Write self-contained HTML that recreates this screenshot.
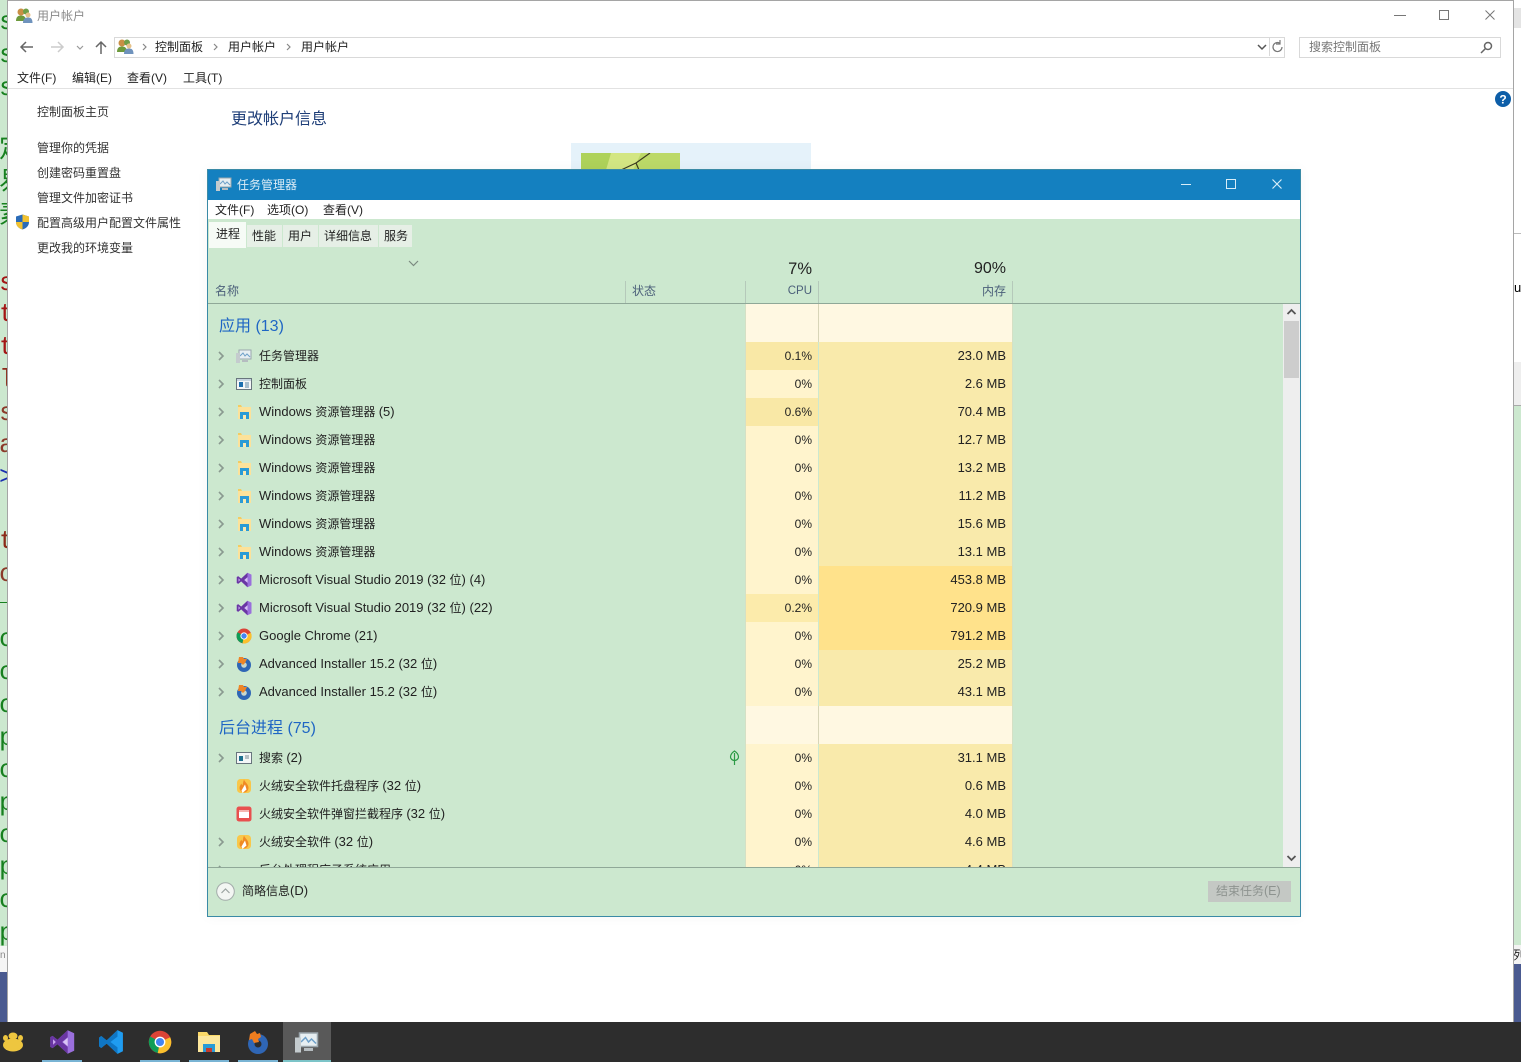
<!DOCTYPE html>
<html lang="zh-CN"><head><meta charset="utf-8"><title>任务管理器</title>
<style>
html,body{margin:0;padding:0;width:1521px;height:1062px;overflow:hidden;background:#fff}
body{position:relative;font-family:"Liberation Sans","Noto Sans CJK SC",sans-serif;font-size:12px;color:#222}
.a,.t,.r,.r>*{position:absolute}
.t{white-space:nowrap;line-height:20px}
i{font-style:normal;font-size:13px}
.k{font-family:"Liberation Mono","Noto Sans CJK SC",monospace;font-size:26px;line-height:32px;left:-1px;white-space:nowrap}
.g{color:#17801f}.d{color:#a31515}
.l{color:#333;left:37px}
.r{left:209px;width:1074px;height:28px;line-height:28px;white-space:nowrap}
.r .n{left:50px;color:#222}
.r .c,.r .m{top:0;height:28px;text-align:right;box-sizing:border-box;padding-right:6px}
.r .c{left:537px;width:72px;background:#fff4cd;color:#222}
.r .m{left:610px;width:193px;background:#f9eaab;font-size:13px}
.r .c.h{background:#f9e8a6}.r .c.u{background:#fcebab}
.r .m.b{background:#ffe28b}
.r svg{left:27px;top:6px}
.r .x{left:8px;top:9px}
.gp{position:absolute;height:38px;left:746px}
</style></head><body>
<svg width="0" height="0" style="position:absolute">
<symbol id="ar" viewBox="0 0 8 10"><path d="M2 1l4 4-4 4" fill="none" stroke="#8a9a90" stroke-width="1.6"/></symbol>
<symbol id="tm" viewBox="0 0 16 16"><rect x="3" y="2" width="12" height="9" fill="#e6eef2" stroke="#9aa6ad"/><path d="M4 8l3-3 2 3 2-2 3 3" fill="none" stroke="#6d9fc8"/><rect x="0" y="5" width="4" height="10" fill="#c4cbce"/><rect x="6" y="12" width="6" height="2" fill="#b5bcc0"/></symbol>
<symbol id="cp" viewBox="0 0 16 16"><rect x=".5" y="2.5" width="15" height="11" fill="#f4f6f7" stroke="#68757d"/><rect x="1" y="3" width="14" height="2" fill="#c7d5df"/><rect x="3" y="6" width="4" height="5" fill="#1d6fae"/><path d="M9 7h4M9 9h4M9 11h4" stroke="#5c86a3"/></symbol>
<symbol id="ex" viewBox="0 0 16 16"><path d="M2 1h3l1 2H2z" fill="#f3cc62"/><rect x="2" y="3" width="13" height="12" fill="#fce29a"/><rect x="4" y="8" width="9" height="7" fill="#2a9bd6"/><rect x="7" y="11" width="3" height="4" fill="#fbe9b0"/></symbol>
<symbol id="vs" viewBox="0 0 16 16"><path d="M11.5.8L15.5 2.600V13.400L11.500 15.200L5.200 9.400 2.200 11.800.8 11V5L2.200 4.200 5.200 6.600z" fill="#9a6fdc"/><path d="M11.500.8V5L8 8l3.500 3v4.200L5.200 9.400 2.200 11.800.8 11V5L2.200 4.200 5.200 6.600z" fill="#6a36a3"/><path d="M2.500 6.300L4.200 8 2.500 9.700z" fill="#ccaaf0"/><path d="M11.500 5.400V10.600L8.500 8z" fill="#d9c4f5"/></symbol>
<symbol id="ch" viewBox="0 0 16 16"><circle cx="8" cy="8" r="7.500" fill="#db4437"/><path d="M8 8L1.500 4.300A7.500 7.500 0 0 0 6.500 15.300z" fill="#0f9d58"/><path d="M8 8l6.800-3.200A7.500 7.500 0 0 1 6.500 15.400z" fill="#fbc02d"/><circle cx="8" cy="8" r="3.600" fill="#fff"/><circle cx="8" cy="8" r="2.700" fill="#4285f4"/></symbol>
<symbol id="ai" viewBox="0 0 16 16"><circle cx="8" cy="9" r="7" fill="#2f66b5"/><circle cx="8" cy="9" r="2.800" fill="#c9d6cc"/><path d="M3 1h4l1 2h3L9 7 7 9 5 7H2z" fill="#ee8527"/></symbol>
<symbol id="ait" viewBox="0 0 24 24"><circle cx="12" cy="14" r="10" fill="#2f66b5"/><circle cx="12" cy="14" r="3.500" fill="#2d2d2d"/><path d="M4 4l5-3 2 3 3-1 1 4-3 2 1 3-5 1-2-4-3 1z" fill="#ee7d1f"/></symbol>
<symbol id="fo" viewBox="0 0 24 24"><path d="M1 2h9l2 3h11v17H1z" fill="#fbd968"/><rect x="1" y="6" width="22" height="16" fill="#fde79c"/><path d="M6 14h12v8h-3v-4H9v4H6z" fill="#2a9bd6"/><rect x="9" y="18" width="6" height="4" fill="#c43b2f"/></symbol>
<symbol id="fl" viewBox="0 0 16 16"><rect x="1" y="1" width="14" height="14" rx="3.500" fill="#f9c74a"/><path d="M8 1.500c1 3 4.500 4.500 4.500 8.500a4.500 4.500 0 0 1-9 0c0-2 1-3 2-4.500 0 1 .5 1.500 1 2 .5-2 .5-3.500 1.500-6z" fill="#f08a24"/><path d="M9 6.500l1.500 5-4 3.500-1-2.500z" fill="#fff"/></symbol>
<symbol id="rw" viewBox="0 0 16 16"><rect x=".5" y=".5" width="15" height="15" rx="2.500" fill="#e8504f"/><rect x="3" y="4" width="10" height="8" fill="#fff"/><rect x="3" y="4" width="10" height="2" fill="#f5b5b0"/></symbol>
<symbol id="sr" viewBox="0 0 16 16"><rect x=".5" y="2.500" width="15" height="11" fill="#f4f6f7" stroke="#68757d"/><rect x="3" y="6" width="4" height="5" fill="#1d6f8e"/><path d="M9 6h4M9 8h4" stroke="#7a8a93"/></symbol>
<symbol id="us" viewBox="0 0 18 18"><circle cx="6" cy="5" r="3.500" fill="#c98f45"/><circle cx="11" cy="4.500" r="3" fill="#6f9f48"/><path d="M1 14c0-4 2-5.500 5-5.500s5 1.500 5 5.500z" fill="#6d9a3c"/><path d="M8 16c0-4 2-5.500 5-5.500s4.500 1.500 4.500 5.500z" fill="#6f93bd"/><circle cx="13" cy="8" r="2.500" fill="#e6c28a"/></symbol>
</svg>

<!-- left background strip -->
<div class="a" style="left:0;top:0;width:8px;height:946px;background:#cce8cf;overflow:hidden">
<div class="a k g" style="top:6px">s</div><div class="a k g" style="top:39px">s</div><div class="a k g" style="top:72px">s</div>
<div class="a k g" style="top:134px">定</div><div class="a k g" style="top:167px">易</div><div class="a k g" style="top:200px">素</div>
<div class="a k d" style="top:267px">s</div><div class="a k d" style="top:298px">t</div><div class="a k d" style="top:331px">t</div><div class="a k d" style="top:364px;color:#8b2a1a">l</div><div class="a k d" style="top:397px;color:#8b3a2a">s</div><div class="a k d" style="top:429px;color:#8b3a2a">a</div>
<div class="a k" style="top:461px;color:#1a2fb0">&gt;</div>
<div class="a k d" style="top:525px;color:#8b2a1a">t</div><div class="a k d" style="top:558px;color:#8b3a2a">c</div>
<div class="a" style="left:0;top:602px;width:8px;height:1px;background:#17801f"></div>
<div class="a k g" style="top:623px">c</div><div class="a k g" style="top:656px">c</div><div class="a k g" style="top:689px">c</div><div class="a k g" style="top:722px">p</div><div class="a k g" style="top:754px">c</div><div class="a k g" style="top:787px">p</div><div class="a k g" style="top:819px">c</div><div class="a k g" style="top:851px">p</div><div class="a k g" style="top:884px">c</div><div class="a k g" style="top:917px">p</div>
</div>
<div class="a" style="left:0;top:946px;width:8px;height:26px;background:#f5f5f5;overflow:hidden"><span class="t" style="left:0;top:0;color:#888;font-size:10px">n</span></div>
<div class="a" style="left:0;top:972px;width:8px;height:50px;background:#4a5a90"></div>

<!-- right background strip -->
<div class="a" style="left:1514px;top:8px;width:7px;height:20px;background:#e4e4e4"></div>
<div class="a" style="left:1514px;top:233px;width:7px;height:1px;background:#bbb"></div>
<div class="a" style="left:1514px;top:362px;width:7px;height:43px;background:#eee"></div>
<div class="a" style="left:1514px;top:405px;width:7px;height:1px;background:#aaa"></div>
<div class="t" style="left:1514px;top:278px;color:#000;font-size:13px;width:7px;overflow:hidden">u</div>
<div class="a" style="left:1514px;top:406px;width:7px;height:539px;background:#cce8cf"></div>
<div class="t" style="left:1513px;top:945px;width:8px;height:19px;overflow:hidden;background:#f3f3f3;color:#222">列</div>
<div class="a" style="left:1514px;top:964px;width:7px;height:58px;background:#4a5a90"></div>

<!-- control panel window -->
<div class="a" style="left:7px;top:0;width:1507px;height:1022px;background:#fff;box-sizing:border-box;border:1px solid #a5a5a5;border-bottom:0"></div>
<svg class="a" style="left:15px;top:7px" width="18" height="18"><use href="#us"/></svg>
<div class="t" style="left:37px;top:6px;color:#8a8a8a">用户帐户</div>
<svg class="a" style="left:1390px;top:8px" width="110" height="14" fill="none" stroke="#777"><path d="M4 7.500h12"/><rect x="49.500" y="2.500" width="9" height="9"/><path d="M95.500 2.500l9 9M104.500 2.500l-9 9"/></svg>
<svg class="a" style="left:18px;top:38px" width="92" height="18" fill="none"><path d="M3 9h12M8 4L3 9l5 5" stroke="#666" stroke-width="1.500"/><path d="M33 9h12M40 4l5 5-5 5" stroke="#ccc" stroke-width="1.500"/><path d="M59 8l3 3 3-3" stroke="#999" stroke-width="1.200"/><path d="M83 16V4M78 9l5-5 5 5" stroke="#666" stroke-width="1.500"/></svg>
<div class="a" style="left:114px;top:37px;width:1171px;height:21px;box-sizing:border-box;border:1px solid #d9d9d9;background:#fff"></div>
<svg class="a" style="left:116px;top:38px" width="18" height="18"><use href="#us"/></svg>
<svg class="a" style="left:140px;top:42px" width="190" height="10" fill="none" stroke="#888" stroke-width="1.200"><path d="M3 2l3 3-3 3M74 2l3 3-3 3M147 2l3 3-3 3"/></svg>
<div class="t" style="left:155px;top:37px;color:#222">控制面板</div>
<div class="t" style="left:228px;top:37px;color:#222">用户帐户</div>
<div class="t" style="left:301px;top:37px;color:#222">用户帐户</div>
<svg class="a" style="left:1256px;top:38px" width="30" height="18" fill="none"><path d="M2 7l4 4 4-4" stroke="#555" stroke-width="1.500"/><path d="M13.500 0v20" stroke="#d9d9d9"/><path d="M26 9a4.500 4.500 0 1 1-2-3.700M24 2v4h-4" stroke="#777" stroke-width="1.200"/></svg>
<div class="a" style="left:1299px;top:37px;width:202px;height:21px;box-sizing:border-box;border:1px solid #d9d9d9"></div>
<div class="t" style="left:1309px;top:37px;color:#777">搜索控制面板</div>
<svg class="a" style="left:1479px;top:40px" width="15" height="15" fill="none" stroke="#666" stroke-width="1.500"><circle cx="9" cy="6" r="3.500"/><path d="M6.500 8.500L2 13"/></svg>
<div class="t" style="left:17px;top:68px">文件(F)</div>
<div class="t" style="left:72px;top:68px">编辑(E)</div>
<div class="t" style="left:127px;top:68px">查看(V)</div>
<div class="t" style="left:183px;top:68px">工具(T)</div>
<div class="a" style="left:8px;top:88px;width:1505px;height:1px;background:#e2e2e2"></div>
<div class="t l" style="top:102px">控制面板主页</div>
<div class="t l" style="top:138px">管理你的凭据</div>
<div class="t l" style="top:163px">创建密码重置盘</div>
<div class="t l" style="top:188px">管理文件加密证书</div>
<svg class="a" style="left:15px;top:214px" width="15" height="16"><path d="M7.500.5L14 2.500V8c0 4-3 6.500-6.500 7.500C4 14.500 1 12 1 8V2.500z" fill="#2b6cb8"/><path d="M7.500.5L14 2.500V8H7.500zM7.500 8V15.500C4 14.500 1 12 1 8z" fill="#f2c230"/></svg>
<div class="t l" style="top:213px">配置高级用户配置文件属性</div>
<div class="t l" style="top:238px">更改我的环境变量</div>
<div class="t" style="left:231px;top:109px;font-size:16px;color:#1e3e78;line-height:21px">更改帐户信息</div>
<svg class="a" style="left:1495px;top:91px" width="16" height="16"><circle cx="8" cy="8" r="8" fill="#0d5ea8"/><text x="8" y="12.500" font-size="12" font-weight="bold" font-family="Liberation Sans" fill="#fff" text-anchor="middle">?</text></svg>
<div class="a" style="left:571px;top:143px;width:240px;height:27px;background:#e5f2fa"></div>
<svg class="a" style="left:581px;top:153px" width="99" height="17"><rect width="99" height="17" fill="#bcd968"/><path d="M0 0h30v17H0z" fill="#aed25a"/><path d="M30 0h30l-8 17H25z" fill="#d3e683"/><path d="M40 17l15-7 14-10M55 10l3 7" stroke="#3c3c20" stroke-width="1.200" fill="none"/></svg>

<!-- task manager -->
<div class="a" style="left:207px;top:169px;width:1094px;height:748px;box-sizing:border-box;border:1px solid #3a8aa6;background:#cce8cf;box-shadow:0 0 12px rgba(0,0,0,.04)"></div>
<div class="a" style="left:208px;top:170px;width:1092px;height:30px;background:#1480c0"></div>
<svg class="a" style="left:216px;top:176px" width="16" height="16"><use href="#tm"/></svg>
<div class="t" style="left:237px;top:175px;color:#dcecf6">任务管理器</div>
<svg class="a" style="left:1176px;top:176px" width="112" height="16" fill="none" stroke="#d8edf8"><path d="M5 8.500h10"/><rect x="50.500" y="3.500" width="9" height="9"/><path d="M96.500 3.500l9 9M105.500 3.500l-9 9" stroke-width="1.200"/></svg>
<div class="a" style="left:208px;top:200px;width:1092px;height:19px;background:#fff"></div>
<div class="t" style="left:215px;top:200px">文件(F)</div>
<div class="t" style="left:267px;top:200px">选项(O)</div>
<div class="t" style="left:323px;top:200px">查看(V)</div>
<div class="a" style="left:209px;top:222px;width:37px;height:26px;background:#f6fbf6"></div>
<div class="a" style="left:247px;top:225px;width:165px;height:22px;background:#e6efe6"></div>
<div class="a" style="left:282px;top:225px;width:1px;height:22px;background:#cce8cf"></div>
<div class="a" style="left:318px;top:225px;width:1px;height:22px;background:#cce8cf"></div>
<div class="a" style="left:378px;top:225px;width:1px;height:22px;background:#cce8cf"></div>
<div class="t" style="left:216px;top:224px">进程</div>
<div class="t" style="left:252px;top:226px">性能</div>
<div class="t" style="left:288px;top:226px">用户</div>
<div class="t" style="left:324px;top:226px">详细信息</div>
<div class="t" style="left:384px;top:226px">服务</div>
<svg class="a" style="left:408px;top:260px" width="11" height="7" fill="none" stroke="#7b8a80" stroke-width="1.200"><path d="M1 1l4.500 4.500L10 1"/></svg>
<div class="t" style="left:215px;top:281px;color:#4c607a">名称</div>
<div class="t" style="left:632px;top:281px;color:#4c607a">状态</div>
<div class="t" style="left:746px;width:66px;top:258px;line-height:22px;text-align:right;font-size:16.500px;color:#222">7%</div>
<div class="t" style="left:819px;width:187px;top:258px;line-height:22px;text-align:right;font-size:16px;color:#222">90%</div>
<div class="t" style="left:746px;width:66px;top:281px;text-align:right;color:#4c607a;font-size:11.500px">CPU</div>
<div class="t" style="left:819px;width:187px;top:281px;text-align:right;color:#4c607a">内存</div>
<div class="a" style="left:208px;top:303px;width:1092px;height:1px;background:#8fa898"></div>
<div class="a" style="left:625px;top:281px;width:1px;height:22px;background:#b5c9ba"></div>
<div class="a" style="left:745px;top:281px;width:1px;height:22px;background:#b5c9ba"></div>
<div class="a" style="left:818px;top:281px;width:1px;height:22px;background:#b5c9ba"></div>
<div class="a" style="left:1012px;top:281px;width:1px;height:22px;background:#b5c9ba"></div>

<!-- list -->
<div class="a" style="left:0;top:0;width:1521px;height:867px;overflow:hidden;pointer-events:none">
<div class="gp" style="top:304px;width:72px;background:#fff8e2"></div>
<div class="gp" style="top:304px;left:819px;width:193px;background:#fff8e2"></div>
<div class="a" style="left:818px;top:304px;width:1px;height:38px;background:#d8d5b8"></div>
<div class="gp" style="top:706px;width:72px;background:#fff8e2"></div>
<div class="gp" style="top:706px;left:819px;width:193px;background:#fff8e2"></div>
<div class="a" style="left:818px;top:706px;width:1px;height:38px;background:#d8d5b8"></div>
<div class="t" style="left:219px;top:317px;font-size:16px;color:#1f66c4">应用 (13)</div>
<div class="t" style="left:219px;top:719px;font-size:16px;color:#1f66c4">后台进程 (75)</div>

<div class="r" style="top:342px"><svg class="x" width="8" height="10"><use href="#ar"/></svg><svg width="16" height="16"><use href="#tm"/></svg><span class="n">任务管理器</span><span class="c h">0.1%</span><span class="m">23.0 MB</span></div>
<div class="r" style="top:370px"><svg class="x" width="8" height="10"><use href="#ar"/></svg><svg width="16" height="16"><use href="#cp"/></svg><span class="n">控制面板</span><span class="c">0%</span><span class="m">2.6 MB</span></div>
<div class="r" style="top:398px"><svg class="x" width="8" height="10"><use href="#ar"/></svg><svg width="16" height="16"><use href="#ex"/></svg><span class="n"><i>Windows </i>资源管理器 <i>(5)</i></span><span class="c h">0.6%</span><span class="m">70.4 MB</span></div>
<div class="r" style="top:426px"><svg class="x" width="8" height="10"><use href="#ar"/></svg><svg width="16" height="16"><use href="#ex"/></svg><span class="n"><i>Windows </i>资源管理器</span><span class="c">0%</span><span class="m">12.7 MB</span></div>
<div class="r" style="top:454px"><svg class="x" width="8" height="10"><use href="#ar"/></svg><svg width="16" height="16"><use href="#ex"/></svg><span class="n"><i>Windows </i>资源管理器</span><span class="c">0%</span><span class="m">13.2 MB</span></div>
<div class="r" style="top:482px"><svg class="x" width="8" height="10"><use href="#ar"/></svg><svg width="16" height="16"><use href="#ex"/></svg><span class="n"><i>Windows </i>资源管理器</span><span class="c">0%</span><span class="m">11.2 MB</span></div>
<div class="r" style="top:510px"><svg class="x" width="8" height="10"><use href="#ar"/></svg><svg width="16" height="16"><use href="#ex"/></svg><span class="n"><i>Windows </i>资源管理器</span><span class="c">0%</span><span class="m">15.6 MB</span></div>
<div class="r" style="top:538px"><svg class="x" width="8" height="10"><use href="#ar"/></svg><svg width="16" height="16"><use href="#ex"/></svg><span class="n"><i>Windows </i>资源管理器</span><span class="c">0%</span><span class="m">13.1 MB</span></div>
<div class="r" style="top:566px"><svg class="x" width="8" height="10"><use href="#ar"/></svg><svg width="16" height="16"><use href="#vs"/></svg><span class="n"><i>Microsoft Visual Studio 2019 (32 </i>位<i>) (4)</i></span><span class="c">0%</span><span class="m b">453.8 MB</span></div>
<div class="r" style="top:594px"><svg class="x" width="8" height="10"><use href="#ar"/></svg><svg width="16" height="16"><use href="#vs"/></svg><span class="n"><i>Microsoft Visual Studio 2019 (32 </i>位<i>) (22)</i></span><span class="c u">0.2%</span><span class="m b">720.9 MB</span></div>
<div class="r" style="top:622px"><svg class="x" width="8" height="10"><use href="#ar"/></svg><svg width="16" height="16"><use href="#ch"/></svg><span class="n"><i>Google Chrome (21)</i></span><span class="c">0%</span><span class="m b">791.2 MB</span></div>
<div class="r" style="top:650px"><svg class="x" width="8" height="10"><use href="#ar"/></svg><svg width="16" height="16"><use href="#ai"/></svg><span class="n"><i>Advanced Installer 15.2 (32 </i>位<i>)</i></span><span class="c">0%</span><span class="m">25.2 MB</span></div>
<div class="r" style="top:678px"><svg class="x" width="8" height="10"><use href="#ar"/></svg><svg width="16" height="16"><use href="#ai"/></svg><span class="n"><i>Advanced Installer 15.2 (32 </i>位<i>)</i></span><span class="c">0%</span><span class="m">43.1 MB</span></div>
<div class="r" style="top:744px"><svg class="x" width="8" height="10"><use href="#ar"/></svg><svg width="16" height="16"><use href="#sr"/></svg><span class="n">搜索 <i>(2)</i></span><span class="c">0%</span><span class="m">31.1 MB</span></div>
<div class="r" style="top:772px"><svg width="16" height="16"><use href="#fl"/></svg><span class="n">火绒安全软件托盘程序 <i>(32 </i>位<i>)</i></span><span class="c">0%</span><span class="m">0.6 MB</span></div>
<div class="r" style="top:800px"><svg width="16" height="16"><use href="#rw"/></svg><span class="n">火绒安全软件弹窗拦截程序 <i>(32 </i>位<i>)</i></span><span class="c">0%</span><span class="m">4.0 MB</span></div>
<div class="r" style="top:828px"><svg class="x" width="8" height="10"><use href="#ar"/></svg><svg width="16" height="16"><use href="#fl"/></svg><span class="n">火绒安全软件 <i>(32 </i>位<i>)</i></span><span class="c">0%</span><span class="m">4.6 MB</span></div>
<div class="r" style="top:856px"><svg class="x" width="8" height="10"><use href="#ar"/></svg><svg width="16" height="16"><rect x="5" y="6" width="7" height="9" fill="#f4f6f7" stroke="#68757d"/></svg><span class="n">后台处理程序子系统应用</span><span class="c">0%</span><span class="m">4.4 MB</span></div>
<div class="a" style="left:745px;top:304px;width:1px;height:563px;background:#d5e0c5"></div>
<div class="a" style="left:1012px;top:304px;width:1px;height:563px;background:#d5e0c5"></div>
<svg class="a" style="left:729px;top:750px" width="11" height="16" fill="none" stroke="#2b9a45" stroke-width="1.200"><path d="M5.500 1C8.500 3 9.500 5 9.500 7c0 2-2 3.500-4 3.500S1.500 9 1.500 7c0-2 1-4 4-6zM5.500 3v12"/></svg>
</div>

<!-- scrollbar -->
<div class="a" style="left:1283px;top:304px;width:17px;height:563px;background:#eeeeee"></div>
<div class="a" style="left:1284px;top:321px;width:15px;height:57px;background:#cdcdcd"></div>
<svg class="a" style="left:1286px;top:308px" width="11" height="8" fill="none" stroke="#555" stroke-width="1.800"><path d="M1.500 6L5.500 2l4 4"/></svg>
<svg class="a" style="left:1286px;top:854px" width="11" height="8" fill="none" stroke="#555" stroke-width="1.800"><path d="M1.500 2l4 4 4-4"/></svg>

<!-- footer -->
<div class="a" style="left:208px;top:867px;width:1092px;height:1px;background:#8fa898"></div>
<svg class="a" style="left:216px;top:882px" width="19" height="19" fill="none"><circle cx="9.500" cy="9.500" r="8.800" fill="#f3f6f3" stroke="#a4adab"/><path d="M5.500 11l4-4 4 4" stroke="#9aa3a0" stroke-width="1.200"/></svg>
<div class="t" style="left:242px;top:881px">简略信息<i>(D)</i></div>
<div class="a" style="left:1208px;top:881px;width:83px;height:21px;background:#c4c8c4"></div>
<div class="t" style="left:1216px;top:881px;color:#8d938f">结束任务<span style="font-size:12.500px">(E)</span></div>

<!-- taskbar -->
<div class="a" style="left:0;top:1022px;width:1521px;height:40px;background:#2d2d2d"></div>
<div class="a" style="left:283px;top:1022px;width:48px;height:40px;background:#595959"></div>
<div class="a" style="left:42px;top:1060px;width:40px;height:2px;background:#79b4d4"></div>
<div class="a" style="left:140px;top:1060px;width:40px;height:2px;background:#79b4d4"></div>
<div class="a" style="left:189px;top:1060px;width:40px;height:2px;background:#79b4d4"></div>
<div class="a" style="left:238px;top:1060px;width:40px;height:2px;background:#79b4d4"></div>
<div class="a" style="left:283px;top:1060px;width:48px;height:2px;background:#7cc4c8"></div>
<svg class="a" style="left:2px;top:1032px" width="22" height="20"><ellipse cx="11" cy="13" rx="10" ry="6.500" fill="#eec63f"/><ellipse cx="3.500" cy="6" rx="2.500" ry="3" fill="#eec63f"/><ellipse cx="11" cy="4" rx="4.500" ry="3.500" fill="#eec63f"/><ellipse cx="18.500" cy="6" rx="2.500" ry="3" fill="#eec63f"/></svg>
<svg class="a" style="left:49px;top:1029px" width="26" height="26"><use href="#vs"/></svg>
<svg class="a" style="left:98px;top:1029px" width="26" height="26" viewBox="0 0 24 24"><path d="M18 1l5 2.500v17L18 23 8 13.500 3 17.500 1 16V8l2-1.500 5 4z" fill="#1f9cf0"/><path d="M18 1V7l-6.500 5L18 17v6L8 13.500 3 17.500 1 16V8l2-1.500 5 4z" fill="#0f76c4"/></svg>
<svg class="a" style="left:148px;top:1030px" width="24" height="24"><use href="#ch"/></svg>
<svg class="a" style="left:197px;top:1030px" width="24" height="24"><use href="#fo"/></svg>
<svg class="a" style="left:246px;top:1030px" width="24" height="24"><use href="#ait"/></svg>
<svg class="a" style="left:295px;top:1030px" width="24" height="24"><use href="#tm"/></svg>
</body></html>
